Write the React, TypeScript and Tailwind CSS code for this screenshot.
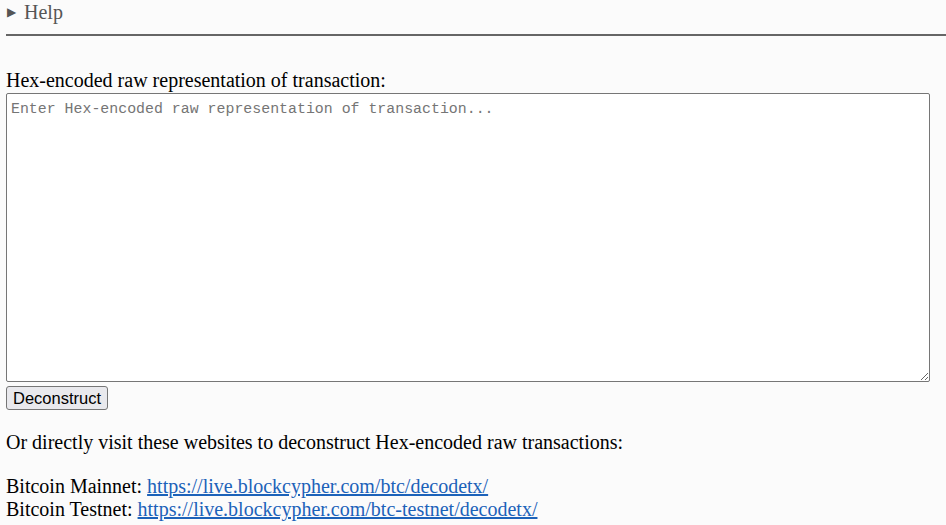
export default function App() {
  return (
    <div className="min-h-[525px] bg-[#fbfbfb] pl-[6px] pt-px font-['Liberation_Serif',serif] text-[20px] leading-[23px] text-black">
      {/* Help toggle */}
      <details>
        <summary className="flex h-[23px] cursor-pointer list-none items-center text-[#555]">
          <span className="ml-px mr-[8px] text-[12px]">▶</span>
          Help
        </summary>
      </details>
      <hr className="mt-[10px] border-0 border-t-2 border-[#666]" />

      <div className="mt-[33px]">
        <label className="block h-[24px]">Hex-encoded raw representation of transaction:</label>
        <textarea
          placeholder="Enter Hex-encoded raw representation of transaction..."
          className="block h-[289px] w-[924px] rounded-[2px] border border-[#767676] bg-white px-[4px] pt-[6px] pb-[3px] font-['Liberation_Mono',monospace] text-[14.9px] leading-[18px] placeholder:text-[#757575]"
        />
        <button className="mt-[4px] block h-[24px] rounded-[3px] border border-[#767676] bg-[#e9e9ed] px-[6px] font-['Liberation_Sans',sans-serif] text-[16.5px] leading-[20px] text-black">
          Deconstruct
        </button>
      </div>

      <p className="mt-[21px]">Or directly visit these websites to deconstruct Hex-encoded raw transactions:</p>

      <p className="mt-[21px]">
        Bitcoin Mainnet:{" "}
        <a href="#" className="text-[#1c62b9] underline">
          https://live.blockcypher.com/btc/decodetx/
        </a>
        <br />
        Bitcoin Testnet:{" "}
        <a href="#" className="text-[#1c62b9] underline">
          https://live.blockcypher.com/btc-testnet/decodetx/
        </a>
      </p>
    </div>
  );
}
